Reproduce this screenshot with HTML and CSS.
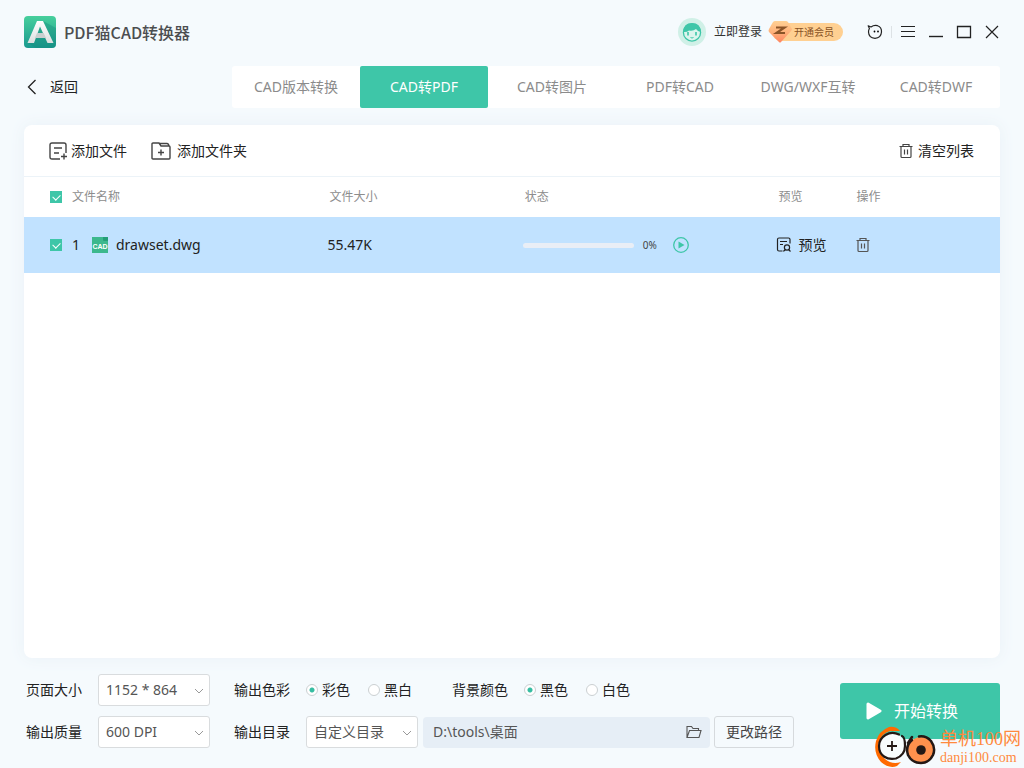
FILE: index.html
```html
<!DOCTYPE html>
<html lang="zh-CN">
<head>
<meta charset="utf-8">
<meta name="viewport" content="width=device-width, initial-scale=1">
<title>PDF猫CAD转换器</title>
<link rel="stylesheet" href="styles.css">
</head>
<body>
<svg class="defs" aria-hidden="true">
  <symbol id="trash" viewBox="0 0 16 16"><path d="M1.500 3.500h13M5 3.500V1.500h6v2M3 3.500v10q0 1 1 1h8q1 0 1-1v-10M6.500 6.500v5M9.500 6.500v5" fill="none" stroke="currentColor" stroke-width="1.200"/></symbol>
  <symbol id="chevron" viewBox="0 0 10 6"><path d="M1 1l4 4 4-4" fill="none" stroke="currentColor"/></symbol>
</svg>
<div class="app">
  <header class="titlebar">
    <svg class="logo" viewBox="0 0 32 32" aria-hidden="true">
      <defs>
        <linearGradient id="lg" x1="0" y1="0" x2="0" y2="1"><stop offset="0" stop-color="#47cf9c"/><stop offset="1" stop-color="#19998f"/></linearGradient>
        <linearGradient id="la" x1="0" y1="0" x2="0" y2="1"><stop offset="0" stop-color="#fff"/><stop offset="1" stop-color="#dcdfdf"/></linearGradient>
      </defs>
      <rect width="32" height="32" rx="4" fill="url(#lg)"/>
      <path d="M19 5l13 7v16q0 4-4 4H12l-8-5z" fill="#128577" opacity=".35"/>
      <path d="M13 5h6l10.500 22h-6L16 10.500 10 27H3.500z" fill="url(#la)"/>
      <path d="M13 17h6.500l2.500 5H11z" fill="#c9cfcf"/>
    </svg>
    <h1 class="title">PDF猫CAD转换器</h1>
    <button class="login" type="button">
      <svg class="avatar" viewBox="0 0 28 28" aria-hidden="true">
        <circle cx="14" cy="14" r="14" fill="#d0f0e7"/>
        <circle cx="14" cy="14.500" r="8.600" fill="#dcf5ed" stroke="#3ec6a8" stroke-width="1.300"/>
        <path d="M5 14Q5.500 5 14 5t9 9q-3 0-5-3-3 2.500-7 1.500-2 2-6 1.500z" fill="#3ec6a8"/>
        <path d="M10 14v3.500M18 14v3.500" stroke="#3ec6a8" stroke-width="1.600"/>
        <path d="M12.500 19.500q1.500 1 3 0" stroke="#3ec6a8" fill="none"/>
      </svg>
      <span>立即登录</span>
    </button>
    <button class="vip" type="button">
      <svg class="gem" viewBox="0 0 24 22" aria-hidden="true">
        <defs><linearGradient id="gg" x1="0" y1="0" x2="0" y2="1"><stop offset="0" stop-color="#ffd194"/><stop offset=".5" stop-color="#ffb37c"/><stop offset="1" stop-color="#ff8560"/></linearGradient></defs>
        <path d="M5 1q1-1 2-1h11q1 0 2 1l4 7q0 1-1 2L13 21q-1 1-2 0L1 11q-1-1 0-3z" fill="url(#gg)"/>
        <path d="M8 6.500h8.500L8.500 12H17" fill="none" stroke="#8b5428" stroke-width="2.200"/>
      </svg>
      <span>开通会员</span>
    </button>
    <div class="window-tools">
      <button type="button" aria-label="客服" class="tool support"><svg viewBox="0 0 16 16"><path d="M1.200 1.800L4 3Q7 .8 10.500 1.700q4.300 1.500 4 6.300-.5 6-6.500 6.300Q1.800 14 1.500 8q0-2 .9-3.500z" fill="none" stroke="currentColor" stroke-width="1.200" stroke-linejoin="round"/><circle cx="7.500" cy="7.500" r=".9"/><circle cx="11" cy="7.500" r=".9"/></svg></button>
      <span class="divider"></span>
      <button type="button" aria-label="菜单" class="tool"><svg viewBox="0 0 16 16"><path d="M1 2.500h14M1 7.500h14M1 12.500h14" stroke="currentColor"/></svg></button>
      <button type="button" aria-label="最小化" class="tool"><svg viewBox="0 0 16 16"><path d="M1 12.500h14" stroke="currentColor" stroke-width="1.400"/></svg></button>
      <button type="button" aria-label="最大化" class="tool"><svg viewBox="0 0 16 16"><path d="M1.500 2.500h13v11h-13z" fill="none" stroke="currentColor" stroke-width="1.300"/></svg></button>
      <button type="button" aria-label="关闭" class="tool"><svg viewBox="0 0 16 16"><path d="M2 2l12 12M14 2L2 14" stroke="currentColor" stroke-width="1.200"/></svg></button>
    </div>
  </header>

  <div class="navrow">
    <button class="back" type="button"><svg viewBox="0 0 10 16" aria-hidden="true"><path d="M9.500 1L2.500 8l7 7" fill="none" stroke="currentColor" stroke-width="1.300"/></svg><span>返回</span></button>
    <nav class="tabs">
      <a href="#version">CAD版本转换</a>
      <a href="#pdf" class="active" aria-current="page">CAD转PDF</a>
      <a href="#image">CAD转图片</a>
      <a href="#cad">PDF转CAD</a>
      <a href="#dxf">DWG/WXF互转</a>
      <a href="#dwf">CAD转DWF</a>
    </nav>
  </div>

  <main class="card">
    <div class="toolbar">
      <button type="button" class="action"><svg class="icon-file" viewBox="0 0 18 18" aria-hidden="true"><path d="M11 17H3q-2 0-2-2V3q0-2 2-2h12q2 0 2 2v8M5 6h8M5 11h5M12 14.500h6M15 11.500v6" fill="none" stroke="currentColor" stroke-width="1.400"/></svg><span>添加文件</span></button>
      <button type="button" class="action folder"><svg class="icon-folder" viewBox="0 0 20 18" aria-hidden="true"><path d="M1 16V2q0-1 1-1h6l2 3h8q1 0 1 1v11q0 1-1 1H2q-1 0-1-1zM8.500 1.500h7.500q1.500 0 2 2.500M10 7.500v6M7 10.500h6" fill="none" stroke="currentColor" stroke-width="1.400"/></svg><span>添加文件夹</span></button>
      <button type="button" class="action clear"><svg class="icon-trash" aria-hidden="true"><use href="#trash"/></svg><span>清空列表</span></button>
    </div>
    <table class="files">
      <thead>
        <tr>
          <th class="col-name"><label class="namecell"><input type="checkbox" checked><span>文件名称</span></label></th>
          <th class="col-size">文件大小</th>
          <th class="col-status">状态</th>
          <th class="col-preview">预览</th>
          <th class="col-ops">操作</th>
        </tr>
      </thead>
      <tbody>
        <tr>
          <td><label class="namecell"><input type="checkbox" checked><span class="index">1</span>
            <svg class="cadicon" viewBox="0 0 16 16" aria-hidden="true"><path d="M0 0h11l5 4v12H0z" fill="#3cb88d"/><path d="M11 0h5v4h-4q-1 0-1-1z" fill="#249e78"/><text class="cadtext" x="8" y="12" text-anchor="middle">CAD</text></svg>
            <span>drawset.dwg</span></label></td>
          <td>55.47K</td>
          <td><div class="status"><progress value="0" max="100" aria-label="转换进度"></progress><span class="percent">0%</span><button type="button" class="play" aria-label="开始"><svg viewBox="0 0 16 16"><circle cx="8" cy="8" r="7.300" fill="none" stroke="currentColor" stroke-width="1.300"/><path d="M5.500 4.500l6 3.500-6 3.500z" fill="currentColor"/></svg></button></div></td>
          <td><button type="button" class="preview"><svg viewBox="0 0 16 16" aria-hidden="true"><path d="M6 14H3q-1.500 0-1.500-1.500V2.500Q1.500 1 3 1h9.500Q14 1 14 2.500V6.500M4 4.500h7M4 7.500h3" fill="none" stroke="currentColor" stroke-width="1.200"/><circle cx="11" cy="10.500" r="2.600" fill="none" stroke="currentColor" stroke-width="1.200"/><path d="M9.500 12.500L8 14H6.500M12.500 12.500l2 2" fill="none" stroke="currentColor" stroke-width="1.200"/></svg><span>预览</span></button></td>
          <td><button type="button" class="remove" aria-label="删除"><svg class="icon-trash" aria-hidden="true"><use href="#trash"/></svg></button></td>
        </tr>
      </tbody>
    </table>
  </main>

  <footer class="settings">
    <div class="rows">
      <div class="row">
        <label class="name" for="size">页面大小</label>
        <span class="selectbox"><select id="size"><option>1152 * 864</option></select><svg><use href="#chevron"/></svg></span>
        <fieldset class="radios">
          <legend class="name">输出色彩</legend>
          <label><input type="radio" name="color" checked>彩色</label>
          <label><input type="radio" name="color">黑白</label>
        </fieldset>
        <fieldset class="radios second">
          <legend class="name">背景颜色</legend>
          <label><input type="radio" name="bg" checked>黑色</label>
          <label><input type="radio" name="bg">白色</label>
        </fieldset>
      </div>
      <div class="row">
        <label class="name" for="quality">输出质量</label>
        <span class="selectbox"><select id="quality"><option>600 DPI</option></select><svg><use href="#chevron"/></svg></span>
        <label class="name spaced" for="dir">输出目录</label>
        <span class="selectbox"><select id="dir"><option>自定义目录</option></select><svg><use href="#chevron"/></svg></span>
        <span class="path"><input type="text" value="D:\tools\桌面" aria-label="输出路径" readonly><button type="button" aria-label="打开目录"><svg viewBox="0 0 16 14"><path d="M1 12.500V1.500h4.500l1.500 2h5.500v2M1 12.500L3.500 5.500H15l-2 7H1z" fill="none" stroke="currentColor" stroke-width="1.100"/></svg></button></span>
        <button type="button" class="change">更改路径</button>
      </div>
    </div>
    <button type="button" class="start"><svg viewBox="0 0 16 18" aria-hidden="true"><path d="M2 2l12 7-12 7z" fill="currentColor" stroke="currentColor" stroke-width="3" stroke-linejoin="round"/></svg><span>开始转换</span></button>
  </footer>

  <div class="watermark">
    <svg viewBox="0 0 64 42" aria-hidden="true">
      <circle cx="18" cy="20" r="13" fill="#f8fcfd"/>
      <path d="M26 5Q22 0 15 1 5 5 2 15-1 27 7 36q8 7 16 4l4-4q-9 3-16-3Q3 25 5 16 8 7 16 5z" fill="#ff6a00"/>
      <path d="M25 8.500Q18 5 11.500 9T5 20q0 7 5 10.500t12 2Q31 29 31 20t-3-10" fill="none" stroke="#231815" stroke-width="2.200" stroke-linecap="round"/>
      <path d="M13 20h10M18 15v10" stroke="#231815" stroke-width="1.800"/>
      <circle cx="47" cy="24" r="13" fill="#ff914d"/>
      <path d="M45 10.500q7-1 12 4.500 5 7 2 14-4 8-12 8-9 0-13-8-3-9 4-15" fill="none" stroke="#231815" stroke-width="2.500" stroke-linecap="round"/>
      <path d="M34 17l4-6" stroke="#231815" stroke-width="2.500" stroke-linecap="round"/>
      <circle cx="47" cy="24" r="4.800" fill="#231815"/>
    </svg>
    <div class="brand"><strong>单机100网</strong><span>danji100.com</span></div>
  </div>
</div>
</body>
</html>
```
FILE: styles.css
```css
* { box-sizing: border-box; }
body {
  margin: 0;
  background: #f5fafd;
  color: #222;
  font: 14px/20px "Noto Sans", "Noto Sans CJK SC", sans-serif;
}
button, input, select { font: inherit; color: inherit; }
button { border: 0; padding: 0; background: none; cursor: pointer; display: flex; align-items: center; }
svg { display: block; flex: none; }
.defs { position: absolute; width: 0; height: 0; }
.app { position: relative; min-height: 100vh; display: flex; flex-direction: column; padding: 16px 24px 20px; }

.titlebar { display: flex; align-items: center; height: 32px; }
.logo { width: 32px; height: 32px; }
.title { margin: 0 auto 0 8px; font: 500 16px/24px "Noto Sans CJK SC", sans-serif; color: #4c4e50; }
.login { gap: 8px; font-size: 12px; color: #333; }
.avatar { width: 28px; height: 28px; }
.vip { position: relative; height: 18px; margin-left: 10px; padding: 0 9px 0 22px; border-radius: 9px; background: #ffd092; color: #885024; font-size: 10px; line-height: 18px; }
.gem { position: absolute; left: -4px; top: -2px; width: 24px; height: 22px; }
.window-tools { display: flex; align-items: center; gap: 12px; margin-left: 24px; color: #222; }
.tool svg { width: 16px; height: 16px; }
.divider { width: 1px; height: 12px; margin-right: -4px; background: #dde2e5; }
.support { margin-right: -4px; }

.navrow { display: flex; align-items: center; margin-top: 18px; }
.back { flex: 0 0 208px; gap: 14px; padding-left: 2px; }
.back svg { width: 10px; height: 16px; }
.tabs { flex: 1; display: grid; grid-template-columns: repeat(6, 1fr); height: 42px; background: #fff; border-radius: 3px; }
.tabs a { display: flex; align-items: center; justify-content: center; color: #8b8b8b; text-decoration: none; white-space: nowrap; }
.tabs .active { background: #3ec6a8; color: #fff; border-radius: 2px; }

.card { flex: 1; margin-top: 17px; background: #fff; border-radius: 8px; box-shadow: 0 0 16px #e9f1f7; overflow: hidden; }
.toolbar { display: flex; align-items: center; height: 52px; padding: 0 26px 0 25px; border-bottom: 1px solid #ecf3f8; }
.action { gap: 4px; }
.action svg { color: #444; }
.icon-file { width: 18px; height: 18px; }
.folder { gap: 6px; margin-left: 24px; }
.icon-folder { width: 20px; height: 18px; }
.clear { margin-left: auto; }
.icon-trash { width: 16px; height: 16px; color: #555; }

.files { width: 100%; table-layout: fixed; border-collapse: collapse; text-align: left; }
.files th { height: 40px; padding: 0 0 0 3px; font-size: 12px; font-weight: 400; color: #8d8d8d; }
.files td { height: 56px; padding: 0 0 0 1px; background: #c1e2ff; }
.files th:first-child, .files td:first-child { padding-left: 26px; }
.col-name { width: 31%; }
.col-size { width: 20%; }
.col-status { width: 26%; }
.col-preview { width: 8%; }
.namecell { display: flex; align-items: center; }
.index { width: 20px; }
.cadicon { width: 16px; height: 16px; margin-right: 8px; }
.cadtext { font: 700 7px "Liberation Sans", sans-serif; fill: #fff; }
input[type="checkbox"] { appearance: none; position: relative; flex: none; width: 12px; height: 12px; margin: 0 10px 0 0; background: #3ec6a8; }
input[type="checkbox"]:checked::after { content: ""; position: absolute; left: 3px; top: 3px; width: 6px; height: 4px; border: solid #fff; border-width: 0 0 1px 1px; transform: rotate(-45deg); }
.status { display: flex; align-items: center; }
progress { appearance: none; width: 111px; height: 5px; border: 0; border-radius: 3px; overflow: hidden; background: #e9eef6; }
progress::-webkit-progress-bar { background: #e9eef6; }
progress::-webkit-progress-value { background: #3ec6a8; }
.percent { width: 30px; margin-left: 9px; font-size: 10px; color: #444; }
.play { color: #3ec6a8; }
.play svg, .preview svg { width: 16px; height: 16px; }
.preview { gap: 6px; }

.settings { display: flex; align-items: center; justify-content: space-between; margin-top: 16px; }
.rows { display: grid; gap: 10px; padding-left: 2px; }
.row { display: flex; align-items: center; height: 32px; white-space: nowrap; }
.name { width: 72px; }
.spaced { margin-left: 24px; }
.selectbox { position: relative; width: 112px; height: 32px; }
.selectbox select { appearance: none; width: 100%; height: 100%; padding: 0 7px; border: 1px solid #d9dcde; border-radius: 3px; background: #fff; color: #555; }
.selectbox svg { position: absolute; right: 6px; top: 14px; width: 10px; height: 6px; color: #999; pointer-events: none; }
.radios { display: flex; align-items: center; border: 0; margin: 0 0 0 24px; padding: 0; }
.radios legend { float: left; padding: 0; }
.radios label { display: flex; align-items: center; width: 62px; }
.second { margin-left: 22px; }
input[type="radio"] { appearance: none; width: 12px; height: 12px; margin: 0 4px 0 0; border: 1px solid #cbd0d2; border-radius: 50%; background: #fff; }
input[type="radio"]:checked { background: radial-gradient(circle, #36bda2 0 2px, #fff 3px); }
.path { display: flex; align-items: center; width: 287px; height: 31px; margin: 0 4px 0 5px; padding: 0 8px 0 10px; border-radius: 4px; background: #e6eef6; color: #555; }
.path input { flex: 1; min-width: 0; padding: 0; border: 0; background: none; }
.path svg { width: 16px; height: 14px; }
.change { justify-content: center; width: 80px; height: 32px; border: 1px solid #d6dadd; border-radius: 3px; color: #444; }
.start { gap: 12px; width: 160px; height: 56px; padding-left: 26px; border-radius: 3px; background: #3ec6a8; color: #fff; font-size: 16px; }
.start svg { width: 16px; height: 18px; }

.watermark { position: absolute; right: 3px; bottom: 0; display: flex; align-items: center; gap: 2px; pointer-events: none; color: #ff8a3d; }
.watermark svg { width: 64px; height: 42px; }
.brand { display: grid; font-family: "Liberation Serif", "Noto Sans CJK SC", serif; }
.brand strong { font-size: 18px; line-height: 20px; font-weight: 400; }
.brand span { font-size: 14px; line-height: 17px; }
```
